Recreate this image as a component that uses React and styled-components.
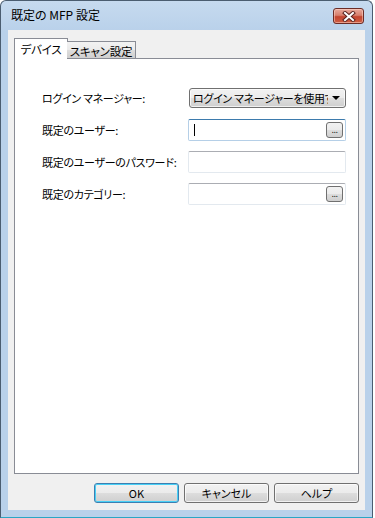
import styled, { createGlobalStyle, css } from "styled-components";

const GlobalStyle = createGlobalStyle`
  html, body {
    margin: 0;
    padding: 0;
    background: #ffffff;
  }
  body {
    font-family: "Noto Sans CJK JP", "Noto Sans", sans-serif;
    font-size: 11px;
    color: #000;
  }
  * {
    box-sizing: border-box;
  }
`;

const Window = styled.div`
  width: 373px;
  height: 518px;
  border: 1px solid #4b5d70;
  border-bottom-color: #2aa6c4;
  border-radius: 6px 6px 0 0;
  background: linear-gradient(180deg, #c6daef 0px, #b9d1ea 30px, #b9d1ea 100%);
  padding: 0 7px 7px 7px;
  display: flex;
  flex-direction: column;
`;

const TitleBar = styled.div`
  height: 29px;
  display: flex;
  align-items: center;
  justify-content: space-between;
  padding: 0 1px 2px 3px;
`;

const Title = styled.div`
  font-size: 12px;
  font-feature-settings: "palt";
  color: #000;
`;

const CloseButton = styled.div`
  width: 31px;
  height: 16px;
  margin-top: 3px;
  border: 1px solid #6b2c26;
  border-radius: 3px;
  background: linear-gradient(180deg, #e9a99b 0%, #d77f6d 45%, #c3442f 55%, #cf5f44 100%);
  display: flex;
  align-items: center;
  justify-content: center;
  box-shadow: inset 0 0 0 1px rgba(255, 220, 210, 0.5);
`;

const Client = styled.div`
  flex: 1;
  background: #f0f0f0;
  padding: 8px 6px 7px 6px;
  display: flex;
  flex-direction: column;
`;

const TabStrip = styled.div`
  height: 20px;
  display: flex;
  align-items: flex-end;
  position: relative;
  z-index: 1;
`;

const Tab = styled.div`
  border: 1px solid #898c95;
  border-bottom: none;
  font-size: 11.5px;
  font-feature-settings: "palt";
  letter-spacing: -0.2px;
  display: flex;
  align-items: center;
  justify-content: center;
  ${({ $active }) =>
    $active
      ? css`
          height: 21px;
          margin-bottom: -1px;
          width: 54px;
          background: #ffffff;
        `
      : css`
          height: 17px;
          width: 69px;
          margin-left: -1px;
          border-left: none;
          background: linear-gradient(180deg, #f2f2f2 0%, #ebebeb 50%, #dddddd 51%, #cfcfcf 100%);
          padding-top: 1px;
        `}
`;

const Panel = styled.div`
  flex: 1;
  background: #ffffff;
  border: 1px solid #898c95;
  padding: 28px 12px 0 27px;
`;

const Form = styled.div`
  display: grid;
  grid-template-columns: 146px 158px;
  grid-auto-rows: 22px;
  row-gap: 10px;
  align-items: center;
`;

const Label = styled.div`
  font-size: 11px;
  font-feature-settings: "palt";
  letter-spacing: -0.3px;
  white-space: nowrap;
`;

const Select = styled.div`
  height: 20px;
  margin-left: 1px;
  border: 1px solid #707070;
  border-radius: 3px;
  background: linear-gradient(180deg, #f2f2f2 0%, #ebebeb 50%, #dddddd 51%, #cfcfcf 100%);
  box-shadow: inset 0 0 0 1px rgba(255, 255, 255, 0.7);
  display: flex;
  align-items: center;
  padding: 0 5px 0 3px;
`;

const SelectText = styled.span`
  flex: 1;
  min-width: 0;
  overflow: hidden;
  white-space: nowrap;
  font-feature-settings: "palt";
  letter-spacing: -0.3px;
  font-size: 11px;
`;

const Arrow = styled.span`
  width: 0;
  height: 0;
  margin-left: 4px;
  border-left: 4px solid transparent;
  border-right: 4px solid transparent;
  border-top: 4px solid #000;
`;

const Input = styled.div`
  height: 22px;
  border: 1px solid #e3e9ef;
  border-top-color: #abadb3;
  border-radius: 2px;
  background: #ffffff;
  display: flex;
  align-items: center;
  justify-content: space-between;
  padding: 0 2px 0 5px;
  ${({ $focused }) =>
    $focused &&
    css`
      border-color: #b5cfe7;
      border-top-color: #3d7bad;
    `}
`;

const Caret = styled.span`
  width: 1px;
  height: 12px;
  background: #000;
`;

const Browse = styled.div`
  width: 17px;
  height: 16px;
  margin-left: auto;
  border: 1px solid #707070;
  border-radius: 3px;
  background: linear-gradient(180deg, #f2f2f2 0%, #ebebeb 50%, #dddddd 51%, #cfcfcf 100%);
  font-family: "DejaVu Sans", sans-serif;
  font-size: 8px;
  line-height: 16px;
  text-align: center;
  letter-spacing: -0.5px;
`;

const ButtonRow = styled.div`
  margin-top: 9px;
  display: flex;
  justify-content: flex-end;
  gap: 5px;
`;

const Button = styled.div`
  width: 85px;
  height: 20px;
  border: 1px solid #707070;
  border-radius: 3px;
  background: linear-gradient(180deg, #f2f2f2 0%, #ebebeb 50%, #dddddd 51%, #cfcfcf 100%);
  box-shadow: inset 0 0 0 1px rgba(255, 255, 255, 0.7);
  display: flex;
  align-items: center;
  justify-content: center;
  font-size: 11px;
  font-feature-settings: "palt";
  ${({ $default }) =>
    $default &&
    css`
      border-color: #3c7fb1;
      box-shadow: inset 0 0 0 1px #48d0f6;
    `}
`;

export default function App() {
  return (
    <>
      <GlobalStyle />
      <Window>
        <TitleBar>
          <Title>既定の MFP 設定</Title>
          <CloseButton>
            <svg width="14" height="11" viewBox="0 0 14 11">
              <path d="M3 2 L11 9 M11 2 L3 9" stroke="#5a2420" strokeWidth="4" strokeLinecap="square" />
              <path d="M3 2 L11 9 M11 2 L3 9" stroke="#ffffff" strokeWidth="2" strokeLinecap="square" />
            </svg>
          </CloseButton>
        </TitleBar>
        <Client>
          <TabStrip>
            <Tab $active>デバイス</Tab>
            <Tab>スキャン設定</Tab>
          </TabStrip>
          <Panel>
            <Form>
              <Label>ログイン マネージャー:</Label>
              <Select>
                <SelectText>ログイン マネージャーを使用す</SelectText>
                <Arrow />
              </Select>
              <Label>既定のユーザー:</Label>
              <Input $focused>
                <Caret />
                <Browse>...</Browse>
              </Input>
              <Label>既定のユーザーのパスワード:</Label>
              <Input />
              <Label>既定のカテゴリー:</Label>
              <Input>
                <Browse>...</Browse>
              </Input>
            </Form>
          </Panel>
          <ButtonRow>
            <Button $default>OK</Button>
            <Button>キャンセル</Button>
            <Button>ヘルプ</Button>
          </ButtonRow>
        </Client>
      </Window>
    </>
  );
}
